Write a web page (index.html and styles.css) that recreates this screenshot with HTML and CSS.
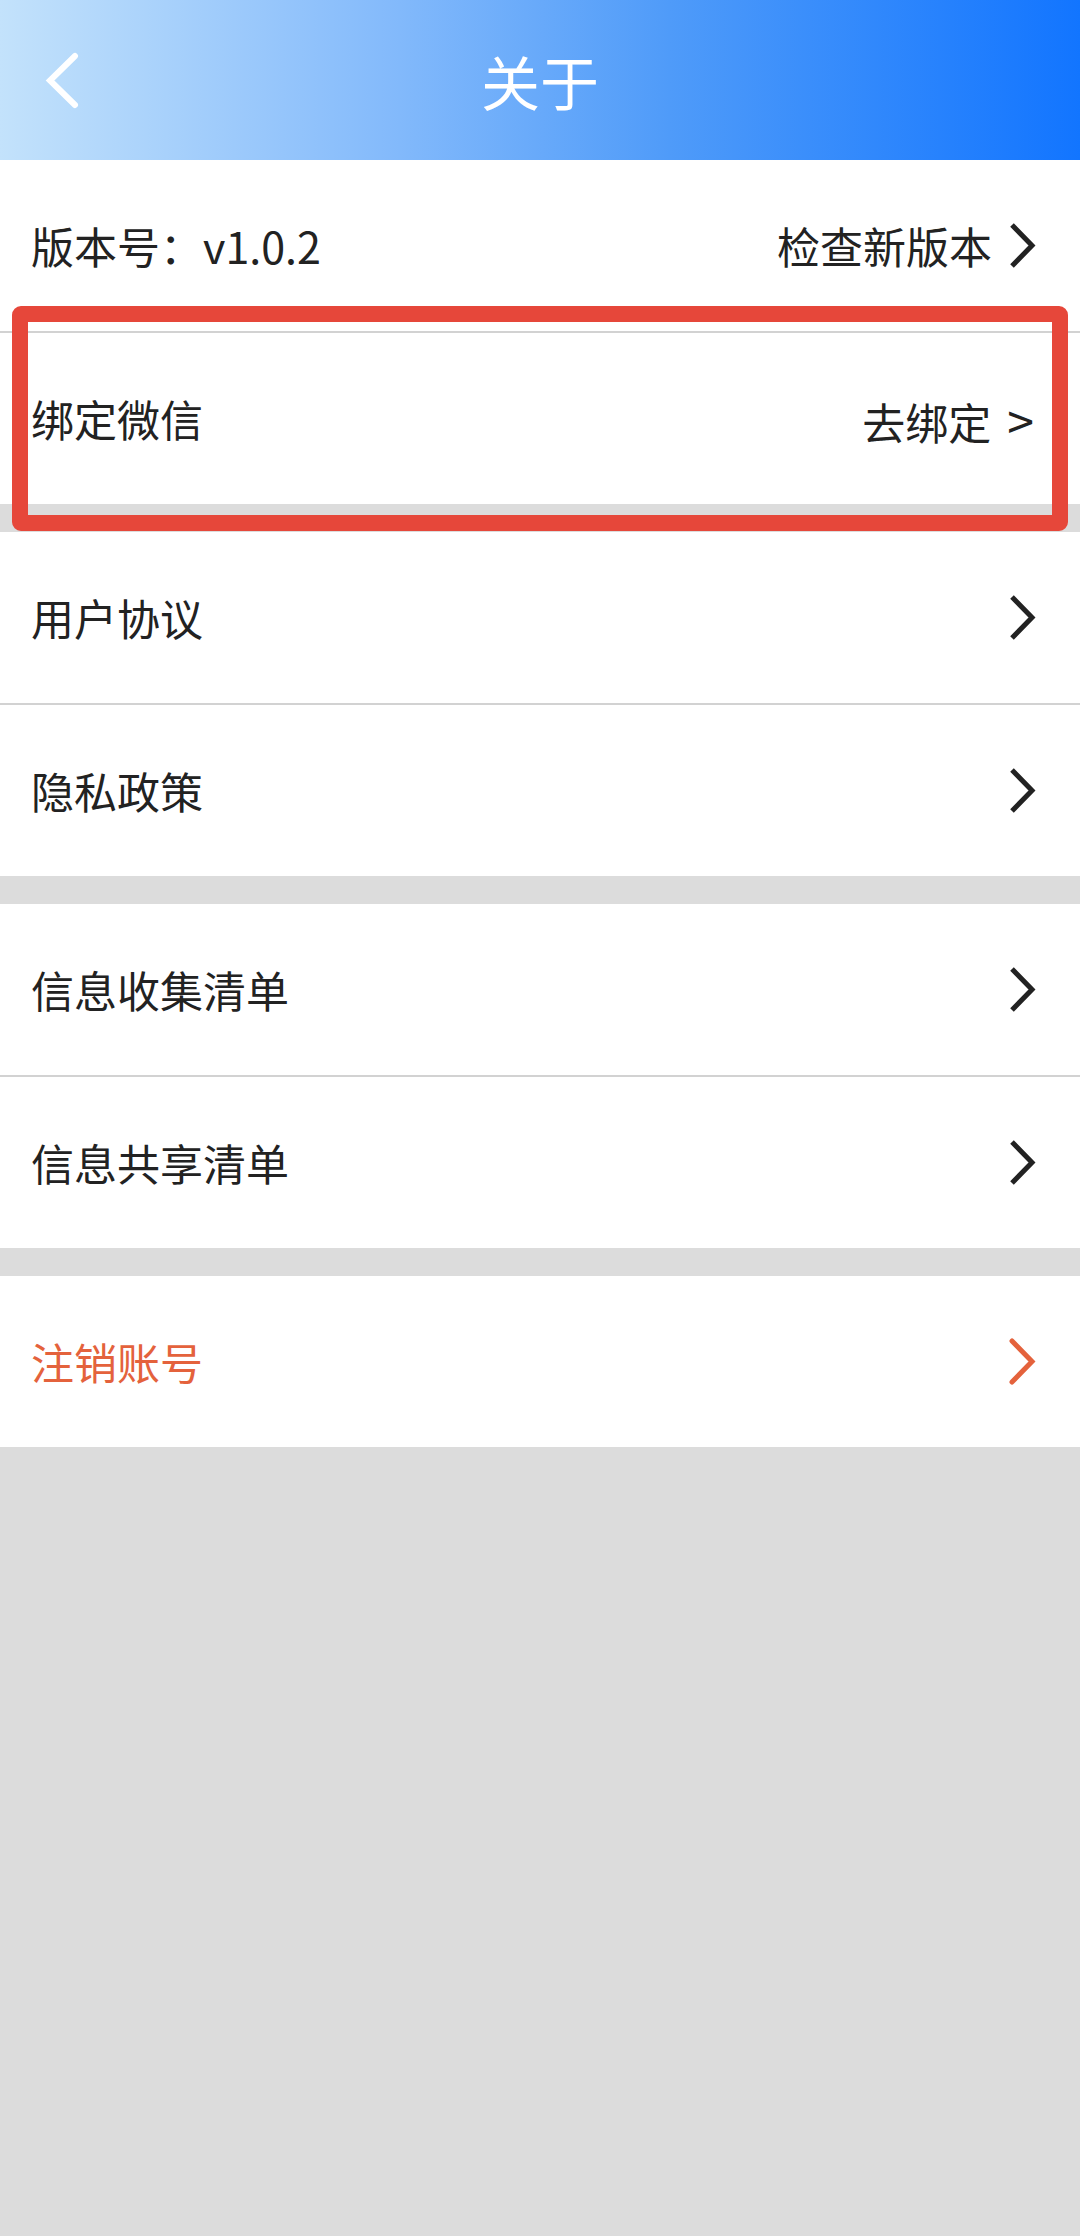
FILE: index.html
```html
<!DOCTYPE html>
<html lang="zh-CN">
<head>
<meta charset="utf-8">
<title>关于</title>
<link rel="stylesheet" href="styles.css">
</head>
<body>
<header class="topbar">
  <div class="back">
    <svg width="34" height="57" viewBox="0 0 34 57"><path d="M30 4 L5 28.5 L30 53" fill="none" stroke="#fff" stroke-width="6" stroke-linecap="round" stroke-linejoin="miter"/></svg>
  </div>
  <h1 class="title">关于</h1>
  <div></div>
</header>

<section class="group first">
  <div class="row">
    <span class="label">版本号：v1.0.2</span>
    <span class="action">检查新版本
      <svg class="chev" width="28" height="48" viewBox="0 0 28 48"><path d="M4 3 L24 23.5 L4 44" fill="none" stroke="#222" stroke-width="5" stroke-linejoin="miter"/></svg>
    </span>
  </div>
  <div class="divider"></div>
  <div class="row">
    <span class="label">绑定微信</span>
    <span class="action plain">去绑定<span class="gt">&gt;</span></span>
  </div>
  <div class="highlight"></div>
</section>

<section class="group">
  <div class="row">
    <span class="label">用户协议</span>
    <svg class="chev" width="28" height="48" viewBox="0 0 28 48"><path d="M4 3 L24 23.5 L4 44" fill="none" stroke="#222" stroke-width="5" stroke-linejoin="miter"/></svg>
  </div>
  <div class="divider"></div>
  <div class="row">
    <span class="label">隐私政策</span>
    <svg class="chev" width="28" height="48" viewBox="0 0 28 48"><path d="M4 3 L24 23.5 L4 44" fill="none" stroke="#222" stroke-width="5" stroke-linejoin="miter"/></svg>
  </div>
</section>

<section class="group">
  <div class="row">
    <span class="label">信息收集清单</span>
    <svg class="chev" width="28" height="48" viewBox="0 0 28 48"><path d="M4 3 L24 23.5 L4 44" fill="none" stroke="#222" stroke-width="5" stroke-linejoin="miter"/></svg>
  </div>
  <div class="divider"></div>
  <div class="row">
    <span class="label">信息共享清单</span>
    <svg class="chev" width="28" height="48" viewBox="0 0 28 48"><path d="M4 3 L24 23.5 L4 44" fill="none" stroke="#222" stroke-width="5" stroke-linejoin="miter"/></svg>
  </div>
</section>

<section class="group">
  <div class="row danger">
    <span class="label">注销账号</span>
    <svg class="chev" width="28" height="48" viewBox="0 0 28 48"><path d="M4 3 L24 23.5 L4 44" fill="none" stroke="#e4623c" stroke-width="5" stroke-linecap="round" stroke-linejoin="miter"/></svg>
  </div>
</section>
</body>
</html>
```

FILE: styles.css
```css
html, body {
  margin: 0;
  padding: 0;
}
body {
  background: #dcdcdc;
  min-height: 2236px;
  font-family: "Noto Sans CJK SC", "Noto Sans", sans-serif;
  color: #222;
}
.topbar {
  height: 160px;
  display: grid;
  grid-template-columns: 1fr auto 1fr;
  align-items: center;
  background: linear-gradient(90deg, #c3e2fb 0%, #82b9fb 37%, #4f9bf9 62%, #1275ff 100%);
}
.back {
  padding-left: 45px;
  display: flex;
  align-items: center;
}
.back svg { display: block; }
.title {
  margin: 0;
  font-size: 59px;
  font-weight: 400;
  color: #fff;
  line-height: 1;
}
.group {
  background: #fff;
  margin-top: 28px;
  position: relative;
}
.group.first {
  margin-top: 0;
}
.row {
  height: 171px;
  display: flex;
  align-items: center;
  justify-content: space-between;
  padding: 0 44px 0 31px;
  font-size: 43px;
  line-height: 1;
}
.label {
  white-space: nowrap;
}
.action {
  display: flex;
  align-items: center;
  gap: 16px;
}
.action.plain {
  gap: 0;
  align-items: baseline;
}
.gt {
  font-size: 48px;
  margin-left: 16px;
  margin-right: 2px;
}
.chev {
  display: block;
  flex: none;
}
.divider {
  height: 2px;
  background: #d2d2d2;
}
.danger .label {
  color: #e4623c;
}
.highlight {
  position: absolute;
  left: 12px;
  top: 146px;
  width: 1056px;
  height: 225px;
  box-sizing: border-box;
  border: 16px solid #e6473a;
  border-radius: 9px;
  pointer-events: none;
}
```
